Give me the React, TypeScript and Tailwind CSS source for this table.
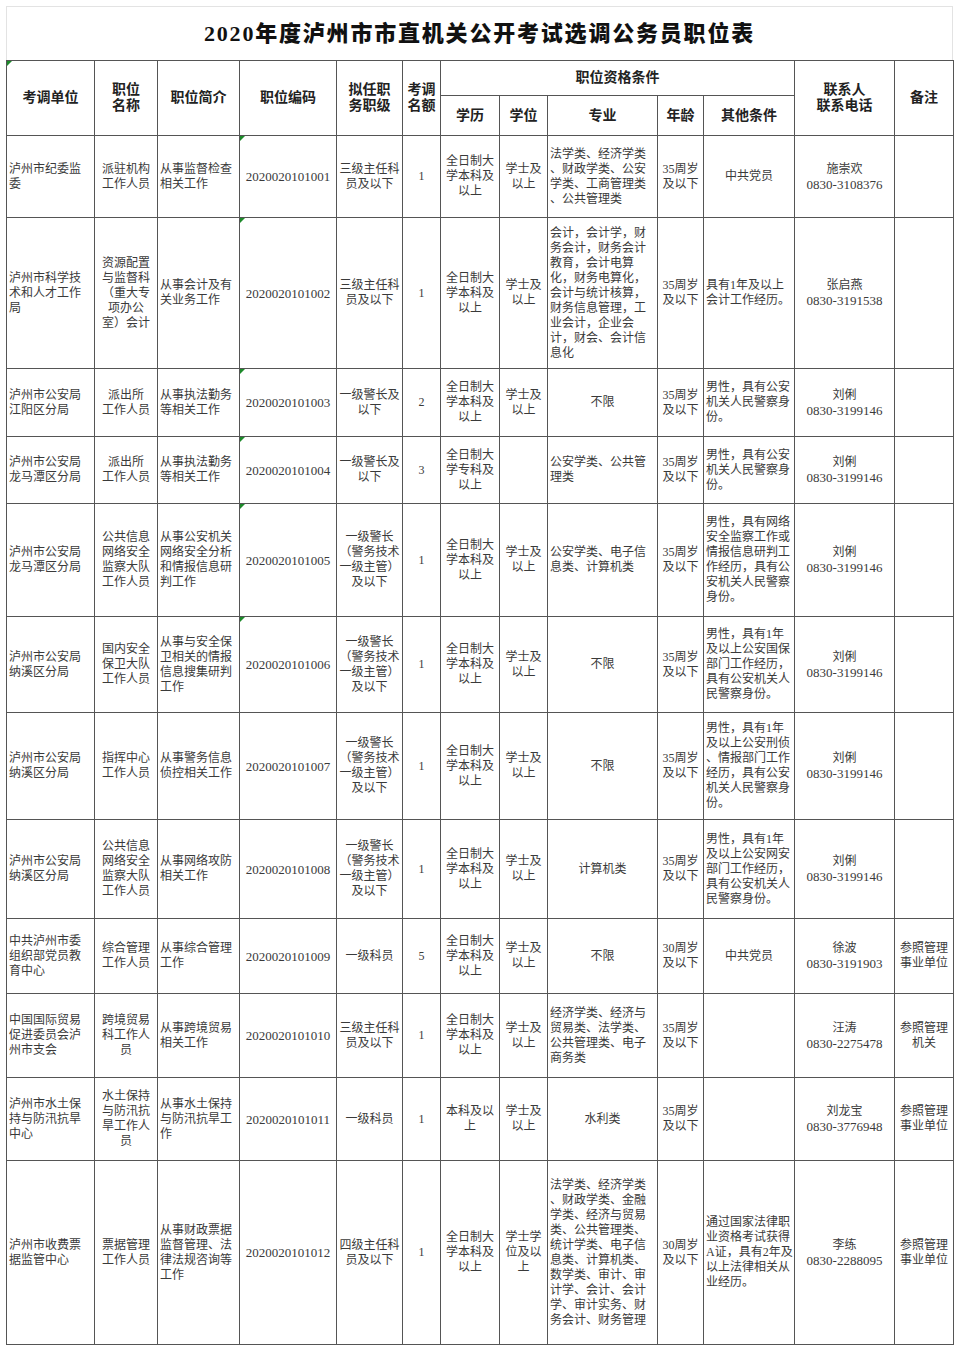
import React from 'react';

type Cell = { t: string; left?: boolean };

const L = (t: string): Cell => ({ t, left: true });
const C = (t: string): Cell => ({ t });

const COLS = [88, 63, 82, 97, 66, 38, 59, 48, 110, 46, 91, 100, 59];

const EDU = C('全日制大\n学本科及\n以上');
const DEG = C('学士及\n以上');
const AGE35 = C('35周岁\n及以下');
const POLICE = C('一级警长\n（警务技术\n一级主管）\n及以下');

// each row: height, flag for green comment marker on 职位编码, cells
const ROWS: { h: number; mark?: boolean; cells: Cell[] }[] = [
    {
        h: 82, mark: true,
        cells: [L('泸州市纪委监\n委'), C('派驻机构\n工作人员'), L('从事监督检查\n相关工作'), C('2020020101001'), C('三级主任科\n员及以下'), C('1'), EDU, DEG,
            L('法学类、经济学类\n、财政学类、公安\n学类、工商管理类\n、公共管理类'), AGE35, C('中共党员'), C('施崇欢\n0830-3108376'), C('')],
    },
    {
        h: 151, mark: true,
        cells: [L('泸州市科学技\n术和人才工作\n局'), C('资源配置\n与监督科\n（重大专\n项办公\n室）会计'), L('从事会计及有\n关业务工作'), C('2020020101002'), C('三级主任科\n员及以下'), C('1'), EDU, DEG,
            L('会计，会计学，财\n务会计，财务会计\n教育，会计电算\n化，财务电算化，\n会计与统计核算，\n财务信息管理，工\n业会计，企业会\n计，财会、会计信\n息化'), AGE35, L('具有1年及以上\n会计工作经历。'), C('张启燕\n0830-3191538'), C('')],
    },
    {
        h: 68, mark: true,
        cells: [L('泸州市公安局\n江阳区分局'), C('派出所\n工作人员'), L('从事执法勤务\n等相关工作'), C('2020020101003'), C('一级警长及\n以下'), C('2'), EDU, DEG,
            C('不限'), AGE35, L('男性，具有公安\n机关人民警察身\n份。'), C('刘俐\n0830-3199146'), C('')],
    },
    {
        h: 67, mark: true,
        cells: [L('泸州市公安局\n龙马潭区分局'), C('派出所\n工作人员'), L('从事执法勤务\n等相关工作'), C('2020020101004'), C('一级警长及\n以下'), C('3'), C('全日制大\n学专科及\n以上'), C(''),
            L('公安学类、公共管\n理类'), AGE35, L('男性，具有公安\n机关人民警察身\n份。'), C('刘俐\n0830-3199146'), C('')],
    },
    {
        h: 113, mark: true,
        cells: [L('泸州市公安局\n龙马潭区分局'), C('公共信息\n网络安全\n监察大队\n工作人员'), L('从事公安机关\n网络安全分析\n和情报信息研\n判工作'), C('2020020101005'), POLICE, C('1'), EDU, DEG,
            L('公安学类、电子信\n息类、计算机类'), AGE35, L('男性，具有网络\n安全监察工作或\n情报信息研判工\n作经历，具有公\n安机关人民警察\n身份。'), C('刘俐\n0830-3199146'), C('')],
    },
    {
        h: 96, mark: true,
        cells: [L('泸州市公安局\n纳溪区分局'), C('国内安全\n保卫大队\n工作人员'), L('从事与安全保\n卫相关的情报\n信息搜集研判\n工作'), C('2020020101006'), POLICE, C('1'), EDU, DEG,
            C('不限'), AGE35, L('男性，具有1年\n及以上公安国保\n部门工作经历，\n具有公安机关人\n民警察身份。'), C('刘俐\n0830-3199146'), C('')],
    },
    {
        h: 107,
        cells: [L('泸州市公安局\n纳溪区分局'), C('指挥中心\n工作人员'), L('从事警务信息\n侦控相关工作'), C('2020020101007'), POLICE, C('1'), EDU, DEG,
            C('不限'), AGE35, L('男性，具有1年\n及以上公安刑侦\n、情报部门工作\n经历，具有公安\n机关人民警察身\n份。'), C('刘俐\n0830-3199146'), C('')],
    },
    {
        h: 99,
        cells: [L('泸州市公安局\n纳溪区分局'), C('公共信息\n网络安全\n监察大队\n工作人员'), L('从事网络攻防\n相关工作'), C('2020020101008'), POLICE, C('1'), EDU, DEG,
            C('计算机类'), AGE35, L('男性，具有1年\n及以上公安网安\n部门工作经历，\n具有公安机关人\n民警察身份。'), C('刘俐\n0830-3199146'), C('')],
    },
    {
        h: 75,
        cells: [L('中共泸州市委\n组织部党员教\n育中心'), C('综合管理\n工作人员'), L('从事综合管理\n工作'), C('2020020101009'), C('一级科员'), C('5'), EDU, DEG,
            C('不限'), C('30周岁\n及以下'), C('中共党员'), C('徐波\n0830-3191903'), C('参照管理\n事业单位')],
    },
    {
        h: 84,
        cells: [L('中国国际贸易\n促进委员会泸\n州市支会'), C('跨境贸易\n科工作人\n员'), L('从事跨境贸易\n相关工作'), C('2020020101010'), C('三级主任科\n员及以下'), C('1'), EDU, DEG,
            L('经济学类、经济与\n贸易类、法学类、\n公共管理类、电子\n商务类'), AGE35, C(''), C('汪涛\n0830-2275478'), C('参照管理\n机关')],
    },
    {
        h: 83,
        cells: [L('泸州市水土保\n持与防汛抗旱\n中心'), C('水土保持\n与防汛抗\n旱工作人\n员'), L('从事水土保持\n与防汛抗旱工\n作'), C('2020020101011'), C('一级科员'), C('1'), C('本科及以\n上'), DEG,
            C('水利类'), AGE35, C(''), C('刘龙宝\n0830-3776948'), C('参照管理\n事业单位')],
    },
    {
        h: 184,
        cells: [L('泸州市收费票\n据监管中心'), C('票据管理\n工作人员'), L('从事财政票据\n监督管理、法\n律法规咨询等\n工作'), C('2020020101012'), C('四级主任科\n员及以下'), C('1'), EDU, C('学士学\n位及以\n上'),
            L('法学类、经济学类\n、财政学类、金融\n学类、经济与贸易\n类、公共管理类、\n统计学类、电子信\n息类、计算机类、\n数学类、审计、审\n计学、会计、会计\n学、审计实务、财\n务会计、财务管理'), C('30周岁\n及以下'), L('通过国家法律职\n业资格考试获得\nA证，具有2年及\n以上法律相关从\n业经历。'), C('李练\n0830-2288095'), C('参照管理\n事业单位')],
    },
];

function Mark() {
    return <span className="absolute left-0 top-0 h-0 w-0 border-t-[5px] border-r-[5px] border-t-[#1d8a2a] border-r-transparent" />;
}

function Lines({ text }: { text: string }) {
    return (
        <>
            {text.split('\n').map((line, i) => (
                <div key={i} className={/^[0-9-]{6,}$/.test(line) ? 'whitespace-nowrap text-[13px]' : 'whitespace-nowrap'}>
                    {line}
                </div>
            ))}
        </>
    );
}

const th = 'border border-[#555] text-center align-middle text-[14px] font-bold leading-[16px] text-[#222]';

export default function App() {
    return (
        <div className="min-h-[1351px] bg-white pl-[6px] pt-[6px] font-['Liberation_Serif','Noto_Sans_CJK_SC',serif]">
            <div className="flex h-[54px] w-[947px] items-center justify-center border border-b-0 border-[#e3e3e3]">
                <h1 className="text-[22px] font-black tracking-[1.8px] text-[#111]">2020年度泸州市市直机关公开考试选调公务员职位表</h1>
            </div>
            <table className="w-[947px] table-fixed border-collapse">
                <colgroup>
                    {COLS.map((w, i) => (
                        <col key={i} style={{ width: w }} />
                    ))}
                </colgroup>
                <thead>
                    <tr className="h-[35px]">
                        <th rowSpan={2} className={`${th} relative`}><Mark />考调单位</th>
                        <th rowSpan={2} className={th}>职位<br />名称</th>
                        <th rowSpan={2} className={th}>职位简介</th>
                        <th rowSpan={2} className={th}>职位编码</th>
                        <th rowSpan={2} className={th}>拟任职<br />务职级</th>
                        <th rowSpan={2} className={th}>考调<br />名额</th>
                        <th colSpan={5} className={th}>职位资格条件</th>
                        <th rowSpan={2} className={th}>联系人<br />联系电话</th>
                        <th rowSpan={2} className={th}>备注</th>
                    </tr>
                    <tr className="h-[40px]">
                        <th className={th}>学历</th>
                        <th className={th}>学位</th>
                        <th className={th}>专业</th>
                        <th className={th}>年龄</th>
                        <th className={th}>其他条件</th>
                    </tr>
                </thead>
                <tbody>
                    {ROWS.map((row, r) => (
                        <tr key={r} style={{ height: row.h }}>
                            {row.cells.map((cell, c) => (
                                <td
                                    key={c}
                                    className={`relative border border-[#555] px-[2px] align-middle text-[12px] leading-[15px] text-[#3a3a3a] ${cell.left ? 'text-left' : 'text-center'}`}
                                >
                                    {c === 3 && row.mark && <Mark />}
                                    <Lines text={cell.t} />
                                </td>
                            ))}
                        </tr>
                    ))}
                </tbody>
            </table>
        </div>
    );
}
